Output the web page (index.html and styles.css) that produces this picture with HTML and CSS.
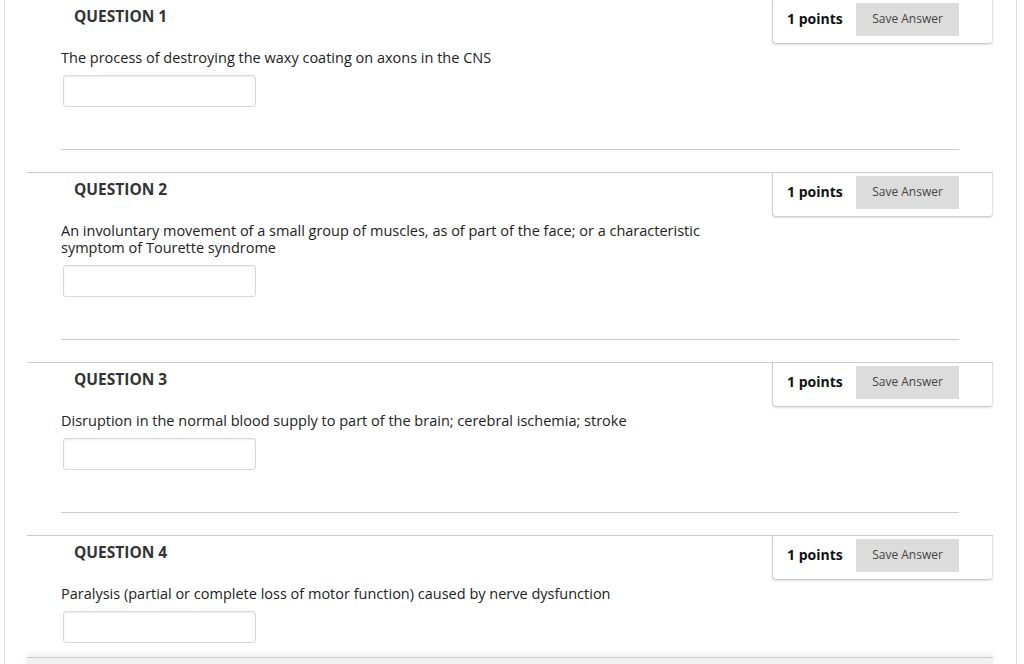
FILE: index.html
```
<!DOCTYPE html>
<html lang="en">
<head>
    <meta charset="UTF-8">
    <meta name="viewport" content="width=device-width, initial-scale=1.0">
    <title>Test</title>
    <link rel="stylesheet" href="styles.css">
</head>
<body>
    <div class="page">
        <div class="question">
            <div class="q-head">
                <h2>QUESTION 1</h2>
                <div class="points">
                    <span>1 points</span>
                    <button class="save">Save Answer</button>
                </div>
            </div>
            <p class="q-text">The process of destroying the waxy coating on axons in the CNS</p>
            <input class="answer" type="text">
            <hr>
        </div>
        <div class="question">
            <div class="q-head">
                <h2>QUESTION 2</h2>
                <div class="points">
                    <span>1 points</span>
                    <button class="save">Save Answer</button>
                </div>
            </div>
            <p class="q-text">An involuntary movement of a small group of muscles, as of part of the face; or a characteristic symptom of Tourette syndrome</p>
            <input class="answer" type="text">
            <hr>
        </div>
        <div class="question">
            <div class="q-head">
                <h2>QUESTION 3</h2>
                <div class="points">
                    <span>1 points</span>
                    <button class="save">Save Answer</button>
                </div>
            </div>
            <p class="q-text">Disruption in the normal blood supply to part of the brain; cerebral ischemia; stroke</p>
            <input class="answer" type="text">
            <hr>
        </div>
        <div class="question last">
            <div class="q-head">
                <h2>QUESTION 4</h2>
                <div class="points">
                    <span>1 points</span>
                    <button class="save">Save Answer</button>
                </div>
            </div>
            <p class="q-text">Paralysis (partial or complete loss of motor function) caused by nerve dysfunction</p>
            <input class="answer" type="text">
        </div>
        <div class="submit-bar"></div>
    </div>
</body>
</html>
```

FILE: styles.css
```
body {
    margin: 0;
    font-family: "Open Sans", sans-serif;
    background: #fff;
    color: #333;
}
.page {
    margin: -1px 0 0 4px;
    width: 966px;
    height: 665px;
    padding: 0 23px 0 22px;
    border-left: 1px solid #ddd;
    border-right: 1px solid #ddd;
    overflow: hidden;
}
.question {
    border-top: 1px solid #ccc;
}
.q-head {
    display: flex;
    justify-content: space-between;
    align-items: flex-start;
}
.q-head h2 {
    margin: 0;
    padding: 5px 0 0 47px;
    font-size: 15.5px;
    line-height: 22px;
    font-weight: 700;
    color: #333;
}
.points {
    box-sizing: border-box;
    width: 221px;
    height: 44px;
    display: flex;
    align-items: flex-start;
    justify-content: space-between;
    padding: 3px 33px 0 14px;
    border: 1px solid #ccc;
    border-right-color: #e4e4e4;
    border-top: none;
    border-radius: 0 0 4px 4px;
    box-shadow: 0 1px 2px rgba(0, 0, 0, 0.12);
    font-size: 14px;
    font-weight: 700;
    color: #111;
}
.points span {
    line-height: 20px;
    margin-top: 6px;
}
.save {
    width: 103px;
    height: 33px;
    padding: 0 0 2px;
    border: none;
    background: #dcdcdc;
    color: #444;
    font-family: "Open Sans", sans-serif;
    font-size: 12px;
}
.q-text {
    margin: 5px 0 0 34px;
    max-width: 680px;
    font-size: 14.5px;
    line-height: 17px;
    color: #222;
}
.answer {
    display: block;
    box-sizing: border-box;
    width: 193px;
    height: 32px;
    margin: 9px 0 0 36px;
    border: 1px solid #d8d8d8;
    border-radius: 3px;
    box-shadow: inset 0 1px 2px rgba(0, 0, 0, 0.08);
}
.question hr {
    margin: 42px 34px 22px;
    border: none;
    border-top: 1px solid #ccc;
}
.question.last .answer {
    margin-bottom: 14px;
}
.submit-bar {
    height: 40px;
    background: #f1f1f1;
    border-top: 1px solid #ccc;
    box-shadow: 0 -3px 6px rgba(0, 0, 0, 0.07);
}
```
